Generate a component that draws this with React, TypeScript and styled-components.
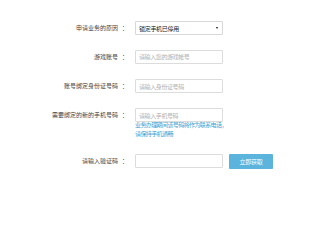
import React from 'react';
import styled, { createGlobalStyle } from 'styled-components';

const GlobalStyle = createGlobalStyle`
    html, body {
        margin: 0;
        padding: 0;
        background: #fff;
    }
    body {
        font-family: "Noto Sans CJK SC", "Noto Sans", sans-serif;
        color: #333;
    }
`;

const Page = styled.div`
    width: 320px;
    height: 204px;
    box-sizing: border-box;
    padding-top: 21px;
    display: flex;
    flex-direction: column;
    gap: 14.67px;
`;

const Row = styled.div`
    display: grid;
    grid-template-columns: 128px 88px 44px;
    column-gap: 7px;
    align-items: start;
`;

const Label = styled.label`
    height: 14px;
    line-height: 14px;
    font-size: 6px;
    text-align: right;
    color: #444;
    white-space: nowrap;
`;

const Colon = styled.span`
    margin-left: 4px;
`;

const Field = styled.div`
    display: flex;
    flex-direction: column;
`;

const Input = styled.input`
    box-sizing: border-box;
    width: 88px;
    height: 14.5px;
    margin: 0;
    padding: 0 3px;
    border: 1px solid #dcdcdc;
    border-radius: 1px;
    font-family: inherit;
    font-size: 6px;
    letter-spacing: -0.4px;
    color: #333;
    outline: none;

    &::placeholder {
        color: #b0b0b0;
    }
`;

const SelectBox = styled.div`
    box-sizing: border-box;
    width: 88px;
    height: 14px;
    padding: 0 3px;
    border: 1px solid #d8d8d8;
    border-radius: 1px;
    display: flex;
    align-items: center;
    justify-content: space-between;
    font-size: 6px;
    letter-spacing: -0.3px;
    color: #222;
`;

const Caret = styled.span`
    width: 0;
    height: 0;
    margin-right: 1px;
    border-left: 1.5px solid transparent;
    border-right: 1.5px solid transparent;
    border-top: 2.5px solid #111;
`;

const Hint = styled.div`
    margin-top: -1px;
    display: flex;
    flex-direction: column;
    font-size: 6px;
    letter-spacing: -0.6px;
    line-height: 8.7px;
    color: #3c9fd2;
    white-space: nowrap;
`;

const Button = styled.button`
    box-sizing: border-box;
    height: 15px;
    width: 44px;
    margin: 0 0 0 -1px;
    padding: 0;
    border: none;
    border-radius: 1px;
    background: #5ab4dc;
    color: #fff;
    font-family: inherit;
    font-size: 6px;
    letter-spacing: -0.3px;
`;

const CodeRow = styled(Row)`
    margin-top: 0.4px;
`;

const App = () => {
    return (
        <>
            <GlobalStyle />
            <Page>
                <Row>
                    <Label>申请业务的原因<Colon>：</Colon></Label>
                    <SelectBox>
                        <span>锁定手机已停用</span>
                        <Caret />
                    </SelectBox>
                </Row>
                <Row>
                    <Label>游戏账号<Colon>：</Colon></Label>
                    <Input placeholder="请输入您的游戏帐号" />
                </Row>
                <Row>
                    <Label>账号绑定身份证号码<Colon>：</Colon></Label>
                    <Input placeholder="请输入身份证号码" />
                </Row>
                <Row>
                    <Label>需要绑定的新的手机号码<Colon>：</Colon></Label>
                    <Field>
                        <Input placeholder="请输入手机号码" />
                        <Hint>
                            <span>业务办理期间该号码将作为联系电话，</span>
                            <span>请保持手机通畅</span>
                        </Hint>
                    </Field>
                </Row>
                <CodeRow>
                    <Label>请输入验证码<Colon>：</Colon></Label>
                    <Input />
                    <Button>立即获取</Button>
                </CodeRow>
            </Page>
        </>
    );
}

export default App;
